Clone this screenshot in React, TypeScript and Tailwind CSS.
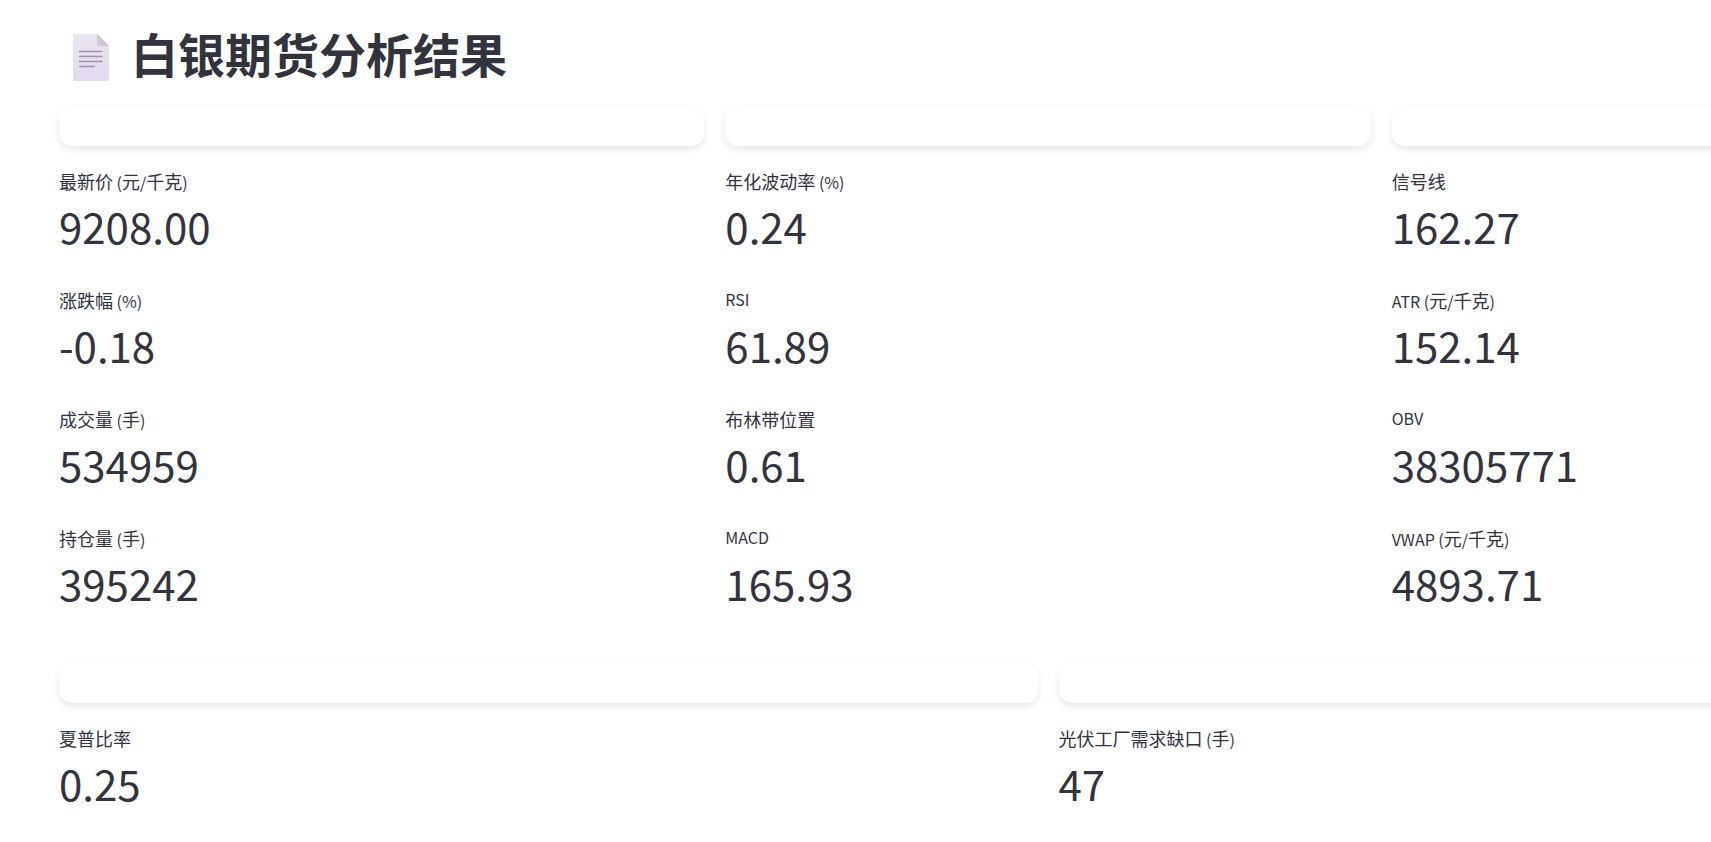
type Metric = { label: string; value: string };

const MARKET_COLUMNS: Metric[][] = [
  [
    { label: "最新价 (元/千克)", value: "9208.00" },
    { label: "涨跌幅 (%)", value: "-0.18" },
    { label: "成交量 (手)", value: "534959" },
    { label: "持仓量 (手)", value: "395242" },
  ],
  [
    { label: "年化波动率 (%)", value: "0.24" },
    { label: "RSI", value: "61.89" },
    { label: "布林带位置", value: "0.61" },
    { label: "MACD", value: "165.93" },
  ],
  [
    { label: "信号线", value: "162.27" },
    { label: "ATR (元/千克)", value: "152.14" },
    { label: "OBV", value: "38305771" },
    { label: "VWAP (元/千克)", value: "4893.71" },
  ],
];

const DEMAND_COLUMNS: Metric[][] = [
  [{ label: "夏普比率", value: "0.25" }],
  [{ label: "光伏工厂需求缺口 (手)", value: "47" }],
];

function PageIcon() {
  return (
    <svg className="h-[47px] w-[36px]" viewBox="0 0 36 47" aria-hidden="true">
      <defs>
        <linearGradient id="sheet" x1="0" y1="0" x2="0" y2="1">
          <stop offset="0" stopColor="#ece5f3" />
          <stop offset="1" stopColor="#e2d8f0" />
        </linearGradient>
        <linearGradient id="fold" x1="0" y1="1" x2="1" y2="0">
          <stop offset="0" stopColor="#dcd6e0" />
          <stop offset="0.5" stopColor="#c5c0c9" />
          <stop offset="1" stopColor="#c5c0c9" />
        </linearGradient>
      </defs>
      <path
        d="M1.5 0H24L36 12V45.5a1.5 1.5 0 0 1-1.5 1.5h-33A1.5 1.5 0 0 1 0 45.5v-44A1.5 1.5 0 0 1 1.5 0z"
        fill="url(#sheet)"
      />
      <path d="M24 0L36 12H24z" fill="url(#fold)" />
      <path
        d="M6.5 17.5h22.5M6.5 22.5h22.5M6.5 27.5h22.5M6.5 32.5h14.5"
        stroke="#9d93a6"
        strokeWidth="1.3"
        strokeLinecap="round"
      />
    </svg>
  );
}

// Chinese runs are set slightly larger than the Latin text around them
function Label({ text }: { text: string }) {
  const runs = text.split(/([\u4e00-\u9fff]+)/).filter(Boolean);

  return (
    <dt className="h-[31px] pt-px text-base leading-6 whitespace-pre">
      {runs.map((run, i) =>
        /[\u4e00-\u9fff]/.test(run) ? (
          <span key={i} className="text-lg leading-[26px]">
            {run}
          </span>
        ) : (
          run
        )
      )}
    </dt>
  );
}

function MetricColumn({ metrics }: { metrics: Metric[] }) {
  return (
    <div className="flex flex-col gap-[21px]">
      <div className="h-10 rounded-[13px] bg-white shadow-[0_3px_7px_rgba(0,0,0,0.1)]" />
      <dl className="flex flex-col gap-[21px]">
        {metrics.map((m) => (
          <div key={m.label} className="h-[98px]">
            <Label text={m.label} />
            <dd className="text-[42px] leading-14">{m.value}</dd>
          </div>
        ))}
      </dl>
    </div>
  );
}

export default function App() {
  return (
    <div className="min-h-screen overflow-hidden bg-white font-['Noto_Sans_CJK_SC',sans-serif] text-[#31333f]">
      <main className="flex w-[calc(100%+326px)] flex-col pt-[22px] pl-[59px]">
        <h1 className="mb-[14px] flex h-[70px] items-center gap-[22px] pl-[14px] text-[47px] leading-[70px] font-bold">
          <PageIcon />
          <span className="pb-2">白银期货分析结果</span>
        </h1>

        <section className="mb-[41px] grid grid-cols-3 gap-[21px]">
          {MARKET_COLUMNS.map((metrics) => (
            <MetricColumn key={metrics[0].label} metrics={metrics} />
          ))}
        </section>

        <section className="grid grid-cols-2 gap-[21px]">
          {DEMAND_COLUMNS.map((metrics) => (
            <MetricColumn key={metrics[0].label} metrics={metrics} />
          ))}
        </section>
      </main>
    </div>
  );
}
